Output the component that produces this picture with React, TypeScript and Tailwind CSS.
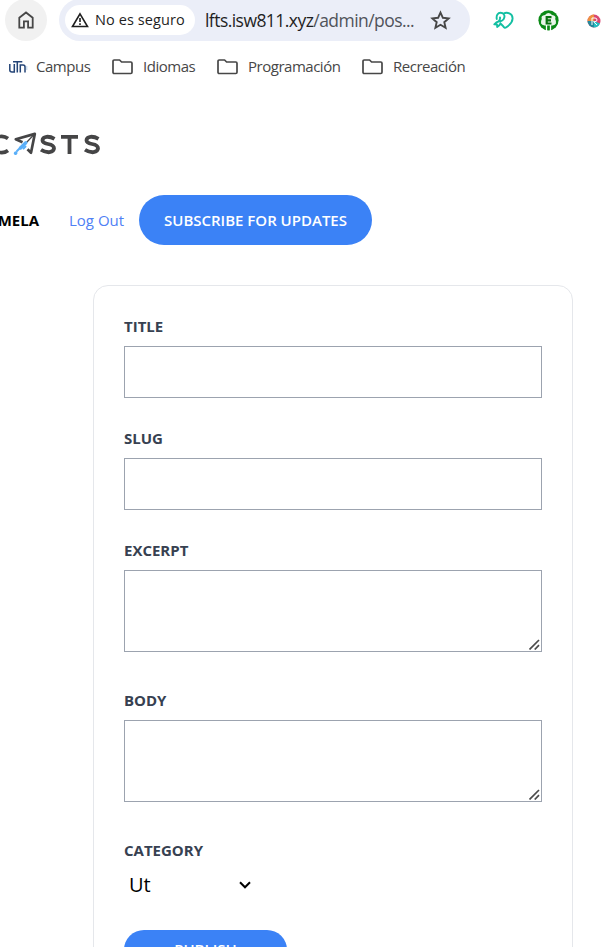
import React from "react";

function FolderIcon() {
  return (
    <svg className="h-[16px] w-[21px] shrink-0" viewBox="0 0 21 16" fill="none" stroke="#474747" strokeWidth="1.7" strokeLinejoin="round">
      <path d="M1 2.2Q1 1 2.2 1H7.6L9.6 3H18.8Q20 3 20 4.200V13.300Q20 14.500 18.800 14.500H2.200Q1 14.500 1 13.300Z" />
    </svg>
  );
}

function Toolbar() {
  return (
    <div className="flex h-[41px] items-start">
      <div className="-mt-[1px] ml-[5px] flex h-[42px] w-[42px] shrink-0 items-center justify-center rounded-full bg-[#f1f1f1]">
        <svg className="h-[18px] w-[16px]" viewBox="0 0 16 18" fill="none" stroke="#474747" strokeWidth="1.800">
          <path d="M1.300 6.700L8 1.500L14.700 6.700V16.600H10.100V10.300H5.900V16.600H1.300Z" />
        </svg>
      </div>
      <div className="-mt-[1px] ml-[12px] flex h-[42px] w-[411px] shrink-0 items-center rounded-full bg-[#ebeef8]">
        <div className="ml-[6px] flex h-[30px] w-[130px] shrink-0 items-center rounded-full bg-white">
          <svg className="ml-[6px] h-[16px] w-[18px] shrink-0" viewBox="0 0 18 16" fill="none" stroke="#1f1f1f" strokeWidth="1.600">
            <path d="M9 1.900L16.500 14.500H1.500Z" />
            <path d="M9 6V10M9 11.300V13" />
          </svg>
          <span className="ml-[6px] whitespace-nowrap text-[14.500px] leading-[20px] tracking-[0.100px] text-[#1f1f1f]">No es seguro</span>
        </div>
        <span className="ml-[10px] w-[213px] shrink-0 whitespace-nowrap text-[17.500px] leading-[24px] tracking-[-0.550px] text-[#1f1f1f]">
          lfts.isw811.xyz<span className="text-[#50535a]">/admin/pos...</span>
        </span>
        <svg className="ml-[12px] h-[20px] w-[21px] shrink-0" viewBox="0 0 21 20" fill="none" stroke="#474747" strokeWidth="1.900">
          <path d="M10.500 2.600L12.900 7.800L18.600 8.400L14.300 12.200L15.600 17.800L10.500 14.800L5.400 17.800L6.700 12.200L2.400 8.400L8.100 7.800Z" />
        </svg>
      </div>
      <svg className="ml-[23px] mt-[11px] h-[19px] w-[21px] shrink-0" viewBox="0 0 21 19" fill="none" stroke="#13bfa2" strokeWidth="1.900" strokeLinecap="round" strokeLinejoin="round">
        <path d="M3.800 8C3 4.500 5 1.800 7.500 1.800C10.500 1.800 12 4 11.300 6.500C10.800 9 8 10.500 5.500 10.500Q7.500 8.500 7 6.500M5.500 10.500Q3.500 11 1.300 13.300L4 13.500L4.200 16Q6.500 14.500 7.500 12.500M10.500 2.500C14 1 19.600 2 19.600 7.500C19.500 12 16 14.500 13 16.500Q11.500 17.500 10 15L7.500 12.500" />
      </svg>
      <svg className="ml-[24px] mt-[10px] h-[21px] w-[21px] shrink-0" viewBox="0 0 21 21" fill="none">
        <circle cx="10.500" cy="10.300" r="10.100" fill="#0b8a16" />
        <path d="M7 5Q10.500 .800 14 5Q18.500 5.500 17.200 9Q20 14.500 14.500 15.500H6.500Q1 14.500 3.800 9Q2.500 5.500 7 5Z" fill="#e8f5e8" />
        <path d="M8.500 15V21M12.500 15V21" stroke="#fff" strokeWidth="1.300" />
        <path d="M13.500 7.200H8.700V13.500H13.500M9 10.350H13" stroke="#08710f" strokeWidth="2.200" />
      </svg>
      <svg className="ml-[28px] mt-[14px] h-[14px] w-[14px] shrink-0" viewBox="0 0 14 14" fill="none">
        <circle cx="7" cy="7" r="6.500" fill="#d94872" />
        <path d="M7 .500A6.500 6.500 0 0 0 .500 7L7 7Z" fill="#ee9040" />
        <path d="M.500 7A6.500 6.500 0 0 0 7 13.500V7Z" fill="#238a9c" />
        <path d="M7 13.500A6.500 6.500 0 0 0 13 9.500L7 7Z" fill="#21bfc2" />
        <path d="M5 11V4H8Q10 4 10 6Q10 7.500 8 7.700H6.500L10 11" stroke="#fff" strokeWidth="1" />
      </svg>
    </div>
  );
}

function Bookmarks() {
  return (
    <div className="mt-[16px] flex h-[20px] items-center whitespace-nowrap text-[15px] leading-[20px] tracking-[-0.480px] text-[#474747]">
      <svg className="ml-[8px] h-[14px] w-[20px] shrink-0" viewBox="0 0 20 14" fill="none" stroke="#244477" strokeWidth="1.500">
        <path d="M1.800 4V10Q1.800 12 4 12H6.300V4M5 1.800H14.300M9.300 2V12.500M12.300 12.500V5H15Q17 5 17 7V12.500" />
        <path d="M18.800 6V10" stroke="#b9d3ea" strokeWidth="1" />
      </svg>
      <span className="mb-[2px] ml-[8px] w-[76px]">Campus</span>
      <FolderIcon />
      <span className="mb-[2px] ml-[10px] w-[74px]">Idiomas</span>
      <FolderIcon />
      <span className="mb-[2px] ml-[10px] w-[114px]">Programación</span>
      <FolderIcon />
      <span className="mb-[2px] ml-[10px]">Recreación</span>
    </div>
  );
}

function Logo() {
  return (
    <svg className="mt-[53px] block h-[30px] w-[110px]" viewBox="0 0 110 30" fill="none" stroke="#454546">
      <path d="M8 8.500Q4 5.500-1 6.700Q-6 8.500-6 14.500Q-6 20.500-1 22.300Q4 23.500 8 20.500" strokeWidth="3.600" />
      <path d="M22.500 12.300L15.800 9.300L34.800 3.900L31 22.800L27.500 19.300" strokeWidth="2.700" strokeLinejoin="round" />
      <path d="M34 4.500L26 13" strokeWidth="1.200" />
      <path d="M20.500 18L25.800 12.700M15.500 23.300L15.800 23" stroke="#5aaff9" strokeWidth="3.400" strokeLinecap="round" />
      <path d="M17 21L21 17M23.500 18.500L25.500 16.500" stroke="#5aaff9" strokeWidth="2" strokeLinecap="round" />
      <path d="M54.500 8.800Q50.500 6.500 46.500 6.800Q42.500 7.500 42.500 10.300Q42.500 13 48 14Q54 15 54 18.300Q54 21.500 49.500 22.200Q45 22.500 41 19.800M98.500 8.800Q94.500 6.500 90.500 6.800Q86.500 7.500 86.500 10.300Q86.500 13 92 14Q98 15 98 18.300Q98 21.500 93.500 22.200Q89 22.500 85 19.800" strokeWidth="3.800" />
      <path d="M61 6.800H78M69.500 6.800V24" strokeWidth="3.800" />
    </svg>
  );
}

function Label({ children }: { children: React.ReactNode }) {
  return <label className="mb-[10px] block text-[15px] font-bold leading-[20px] text-[#374151]">{children}</label>;
}

function ResizeGrip() {
  return (
    <svg className="h-[11px] w-[11px]" viewBox="0 0 11 11" stroke="#4b4b4b" strokeWidth="1.700">
      <path d="M.500 10.500L10 1M5.700 10.500L10 6.200" />
    </svg>
  );
}

function Area({ label }: { label: string }) {
  return (
    <div className="mb-[38px]">
      <Label>{label}</Label>
      <div className="flex h-[82px] items-end justify-end border border-[#9ca3af] pb-[1px] pr-[1px]">
        <ResizeGrip />
      </div>
    </div>
  );
}

export default function App() {
  return (
    <div className="h-[947px] w-[607px] overflow-hidden bg-white font-['Open_Sans',sans-serif]">
      <Toolbar />
      <Bookmarks />
      <Logo />
      <nav className="mt-[35px] flex h-[50px] items-center whitespace-nowrap text-[15px] leading-[20px]">
        <span className="flex w-[39px] shrink-0 justify-end font-bold text-black">MELA</span>
        <span className="ml-[30px] w-[70px] shrink-0 text-[#4f80f5]">Log Out</span>
        <button className="h-[50px] w-[233px] shrink-0 rounded-full bg-[#3b82f6] font-semibold text-white">SUBSCRIBE FOR UPDATES</button>
      </nav>
      <main className="ml-[93px] mt-[40px] h-[700px] w-[480px] rounded-[15px] border border-[#e5e7eb] p-[30px]">
        {["TITLE", "SLUG"].map((name) => (
          <div key={name} className="mb-[30px]">
            <Label>{name}</Label>
            <input className="block h-[52px] w-full border border-[#9ca3af] px-[10px]" />
          </div>
        ))}
        <Area label="EXCERPT" />
        <Area label="BODY" />
        <Label>CATEGORY</Label>
        <div className="flex h-[30px] w-[134px] items-center justify-between pl-[5px] pr-[7px] text-[20px] leading-[30px] text-black">
          <span>Ut</span>
          <svg className="h-[8px] w-[12px]" viewBox="0 0 12 8" fill="none" stroke="#000" strokeWidth="2">
            <path d="M1 1.300L6 6.300L11 1.300" />
          </svg>
        </div>
        <button className="mt-[30px] block h-[40px] w-[163px] rounded-full bg-[#3b82f6] pb-[2px] text-[15px] font-semibold leading-[20px] text-white">PUBLISH</button>
      </main>
    </div>
  );
}
